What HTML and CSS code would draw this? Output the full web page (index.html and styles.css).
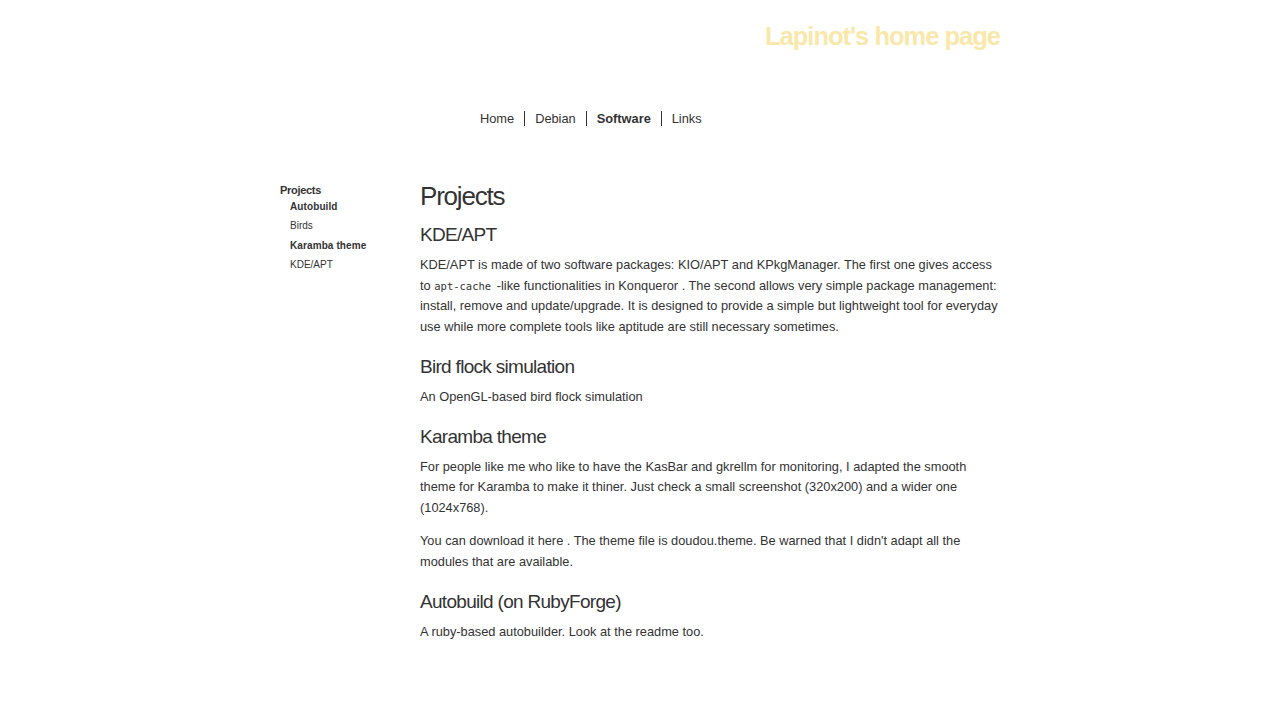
FILE: index.html
```html
<!DOCTYPE html>
<html>
<head>
<meta charset="utf-8">
<title>Lapinot's home page</title>
<link rel="stylesheet" href="styles.css">
</head>
<body>
<div class="page">
  <header class="header">
    <h1 class="site-title">Lapinot's home page</h1>
  </header>
  <nav class="nav">
    <a class="nav-item" href="#">Home</a>
    <a class="nav-item" href="#">Debian</a>
    <a class="nav-item current" href="#">Software</a>
    <a class="nav-item" href="#">Links</a>
  </nav>
  <div class="main">
    <aside class="sidebar">
      <div class="side-title">Projects</div>
      <ul class="side-list">
        <li class="side-item strong">Autobuild</li>
        <li class="side-item">Birds</li>
        <li class="side-item strong">Karamba theme</li>
        <li class="side-item">KDE/APT</li>
      </ul>
    </aside>
    <main class="content">
      <h1 class="page-title">Projects</h1>
      <h2 class="section-title">KDE/APT</h2>
      <p class="text">KDE/APT is made of two software packages: KIO/APT and KPkgManager. The first one gives access to <code class="code">apt-cache</code> -like functionalities in Konqueror . The second allows very simple package management: install, remove and update/upgrade. It is designed to provide a simple but lightweight tool for everyday use while more complete tools like aptitude are still necessary sometimes.</p>
      <h2 class="section-title">Bird flock simulation</h2>
      <p class="text">An OpenGL-based bird flock simulation</p>
      <h2 class="section-title">Karamba theme</h2>
      <p class="text">For people like me who like to have the KasBar and gkrellm for monitoring, I adapted the smooth theme for Karamba to make it thiner. Just check a small screenshot (320x200) and a wider one (1024x768).</p>
      <p class="text">You can download it here . The theme file is doudou.theme. Be warned that I didn't adapt all the modules that are available.</p>
      <h2 class="section-title">Autobuild (on RubyForge)</h2>
      <p class="text">A ruby-based autobuilder. Look at the readme too.</p>
    </main>
  </div>
</div>
</body>
</html>
```

FILE: styles.css
```css
html, body {
  margin: 0;
  padding: 0;
  background: #ffffff;
  color: #333333;
  font-family: "Liberation Sans", Arial, sans-serif;
}

.page {
  width: 720px;
  margin: 0 auto;
}

.header {
  display: flex;
  justify-content: flex-end;
  padding-top: 20px;
  height: 90px;
  box-sizing: border-box;
}

.site-title {
  margin: 0;
  font-size: 25.5px;
  line-height: 32px;
  font-weight: bold;
  letter-spacing: -1px;
  color: #f9e8aa;
}

.nav {
  display: flex;
  padding-left: 200px;
  margin-top: 19px;
  height: 18px;
  align-items: center;
}

.nav-item {
  font-size: 12.8px;
  color: #333333;
  text-decoration: none;
  padding: 0 10px;
  line-height: 15px;
  border-left: 1px solid #333333;
}

.nav-item:first-child {
  border-left: none;
  padding-left: 0;
}

.nav-item.current {
  font-weight: bold;
}

.main {
  display: flex;
  margin-top: 54px;
}

.sidebar {
  width: 140px;
  flex: none;
}

.side-title {
  font-size: 11px;
  font-weight: bold;
  letter-spacing: -0.3px;
  line-height: 16px;
  margin-top: 1px;
}

.side-list {
  list-style: none;
  margin: -1px 0 0;
  padding: 0 0 0 10px;
}

.side-item {
  font-size: 10px;
  line-height: 19.4px;
}

.side-item.strong {
  font-weight: bold;
  letter-spacing: 0.1px;
}

.content {
  width: 580px;
}

.page-title {
  margin: 0;
  font-size: 26px;
  line-height: 30px;
  font-weight: normal;
  letter-spacing: -1.2px;
}

.section-title {
  margin: 12px 0 8px;
  font-size: 19px;
  line-height: 24px;
  font-weight: normal;
  letter-spacing: -0.7px;
}

.text + .section-title {
  margin-top: 17.5px;
}

.text {
  margin: 0 0 13px;
  font-size: 12.8px;
  line-height: 20.5px;
}

.code {
  font-family: "DejaVu Sans Mono", monospace;
  font-size: 10.5px;
  margin-right: 2px;
}
```
